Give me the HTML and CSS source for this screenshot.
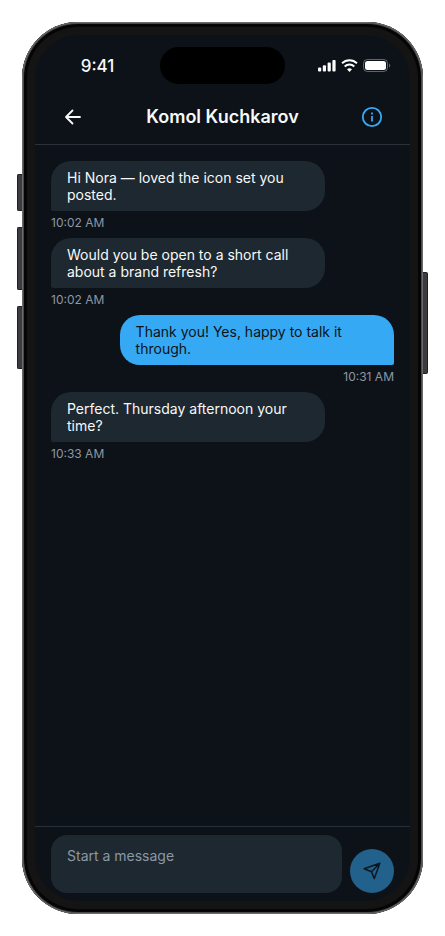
FILE: index.html
```html
<!DOCTYPE html>
<html lang="en">
<head>
<meta charset="utf-8">
<meta name="viewport" content="width=device-width, initial-scale=1">
<title>Messages</title>
<link rel="stylesheet" href="styles.css">
</head>
<body>
<div class="phone">
  <span class="key key-action"></span>
  <span class="key key-up"></span>
  <span class="key key-down"></span>
  <span class="key key-power"></span>
  <div class="screen">
    <div class="status">
      <time class="clock">9:41</time>
      <span class="island"></span>
      <div class="indicators">
        <svg width="18" height="12" viewBox="0 0 18 12" fill="#fff" aria-hidden="true">
          <rect x="0" y="7.5" width="3.2" height="4" rx="1"/>
          <rect x="4.8" y="5.2" width="3.2" height="6.300" rx="1"/>
          <rect x="9.6" y="2.6" width="3.2" height="8.900" rx="1"/>
          <rect x="14.4" y="0" width="3.2" height="11.500" rx="1"/>
        </svg>
        <svg width="17" height="13" viewBox="0 0 17 13" fill="none" stroke="#fff" stroke-width="1.9" aria-hidden="true">
          <path d="M1 4.300a10.700 10.700 0 0 1 15 0"/>
          <path d="M3.700 7.500a6.800 6.800 0 0 1 9.600 0"/>
          <path d="M8.500 13 6 10.300a3.700 3.700 0 0 1 5 0z" fill="#fff" stroke="none"/>
        </svg>
        <svg width="28" height="13" viewBox="0 0 28 13" aria-hidden="true">
          <rect x=".5" y=".5" width="24" height="12" rx="3.8" fill="none" stroke="#fff" stroke-opacity=".35"/>
          <rect x="2" y="2" width="21" height="9" rx="2.5" fill="#fff"/>
          <path d="M26 4.500v4a2.200 2.200 0 0 0 0-4z" fill="#fff" fill-opacity=".35"/>
        </svg>
      </div>
    </div>
    <header class="header">
      <button class="icon-button" type="button" aria-label="Back">
        <svg width="24" height="24" viewBox="0 0 24 24" fill="none" stroke="currentColor" stroke-width="1.8" stroke-linecap="round" stroke-linejoin="round"><path d="M19 12H5.200M11.500 5.500 5 12l6.500 6.500"/></svg>
      </button>
      <h1 class="title">Komol Kuchkarov</h1>
      <button class="icon-button accent" type="button" aria-label="Conversation info">
        <svg width="24" height="24" viewBox="0 0 24 24" fill="none" stroke="currentColor" stroke-width="1.8"><circle cx="12" cy="12" r="9.200"/><path d="M12 11v5.500M12 7.500v2"/></svg>
      </button>
    </header>
    <main class="messages">
      <article class="message">
        <p class="bubble">Hi Nora — loved the icon set you posted.</p>
        <time class="stamp">10:02 AM</time>
      </article>
      <article class="message">
        <p class="bubble">Would you be open to a short call about a brand refresh?</p>
        <time class="stamp">10:02 AM</time>
      </article>
      <article class="message sent">
        <p class="bubble">Thank you! Yes, happy to talk it through.</p>
        <time class="stamp">10:31 AM</time>
      </article>
      <article class="message">
        <p class="bubble">Perfect. Thursday afternoon your time?</p>
        <time class="stamp">10:33 AM</time>
      </article>
    </main>
    <form class="composer">
      <textarea class="field" rows="2" placeholder="Start a message" aria-label="Message"></textarea>
      <button class="send" type="button" aria-label="Send">
        <svg width="20" height="20" viewBox="0 0 20 20" fill="none" stroke="currentColor" stroke-width="1.5" stroke-linejoin="round"><path d="M17.800 2.300 12.300 17.600 9.500 10.800 2.200 7.800zM17.800 2.300 9.500 10.800"/></svg>
      </button>
    </form>
  </div>
</div>
</body>
</html>
```
FILE: styles.css
```css
* { box-sizing: border-box; }

body {
  margin: 0;
  padding: 22px;
  min-height: 100vh;
  display: flex;
  background: #fff;
  color: #f7f9f9;
  font: 14px/17px Inter, "Liberation Sans", sans-serif;
}

button, textarea { font: inherit; border: 0; margin: 0; }

.phone {
  position: relative;
  flex: 1;
  display: flex;
  padding: 13px;
  border-radius: 56px;
  background: #141415;
  box-shadow: inset 0 0 0 1px #6b6b6e, inset 0 0 0 2px #4a4a4d, inset 0 0 0 5px #050505;
}

.key {
  position: absolute;
  left: -5px;
  width: 5px;
  background: #3c3c40;
  border: 1px solid #202022;
  border-right: 0;
  border-radius: 2px 0 0 2px;
}
.key-action { top: 152px; height: 37px; }
.key-up { top: 205px; height: 63px; }
.key-down { top: 284px; height: 63px; }
.key-power {
  top: 250px;
  left: auto;
  right: -5px;
  height: 102px;
  border: 1px solid #202022;
  border-left: 0;
  border-radius: 0 2px 2px 0;
}

.screen {
  flex: 1;
  min-width: 0;
  display: flex;
  flex-direction: column;
  overflow: hidden;
  border-radius: 44px;
  background: #0d1218;
}

.status {
  display: grid;
  grid-template-columns: 1fr 125px 1fr;
  align-items: center;
  height: 54px;
  padding-top: 7px;
}
.clock { font-size: 17px; line-height: 20px; font-weight: 500; text-align: center; }
.island { height: 37px; border-radius: 19px; background: #000; }
.indicators { display: flex; align-items: center; justify-content: center; gap: 5px; padding-left: 14px; }
.indicators svg { flex: none; }

.header {
  display: flex;
  align-items: center;
  height: 56px;
  padding: 0 16px;
  border-bottom: 1px solid #2a3139;
}
.title {
  flex: 1;
  margin: 0;
  text-align: center;
  font-size: 18px;
  line-height: 23px;
  font-weight: 600;
}
.icon-button {
  display: grid;
  place-items: center;
  width: 44px;
  height: 44px;
  padding: 0;
  background: none;
  color: #f7f9f9;
}
.accent { color: #36a9f4; }

.messages {
  flex: 1;
  display: flex;
  flex-direction: column;
  gap: 8px;
  padding: 16px;
}
.message {
  display: flex;
  flex-direction: column;
  align-items: flex-start;
  gap: 4px;
}
.bubble {
  width: 80%;
  margin: 0;
  padding: 8px 16px;
  border-radius: 20px 20px 20px 2px;
  background: #1e2830;
}
.sent { align-items: flex-end; }
.sent .bubble {
  border-radius: 20px 20px 2px 20px;
  background: #36a9f4;
  color: #0d1218;
}
.stamp { font-size: 12px; line-height: 15px; color: #8b98a5; }

.composer {
  display: flex;
  align-items: flex-end;
  gap: 8px;
  padding: 8px 16px;
  border-top: 1px solid #26313b;
}
.field {
  flex: 1;
  min-width: 0;
  padding: 12px 16px;
  border-radius: 16px;
  background: #1e2830;
  color: #f7f9f9;
  resize: none;
  overflow: hidden;
  outline: 0;
}
.field::placeholder { color: #8b98a5; opacity: 1; }
.send {
  display: grid;
  place-items: center;
  flex: none;
  width: 44px;
  height: 44px;
  padding: 0;
  border-radius: 50%;
  background: #22618b;
  color: #0d1720;
}
```
